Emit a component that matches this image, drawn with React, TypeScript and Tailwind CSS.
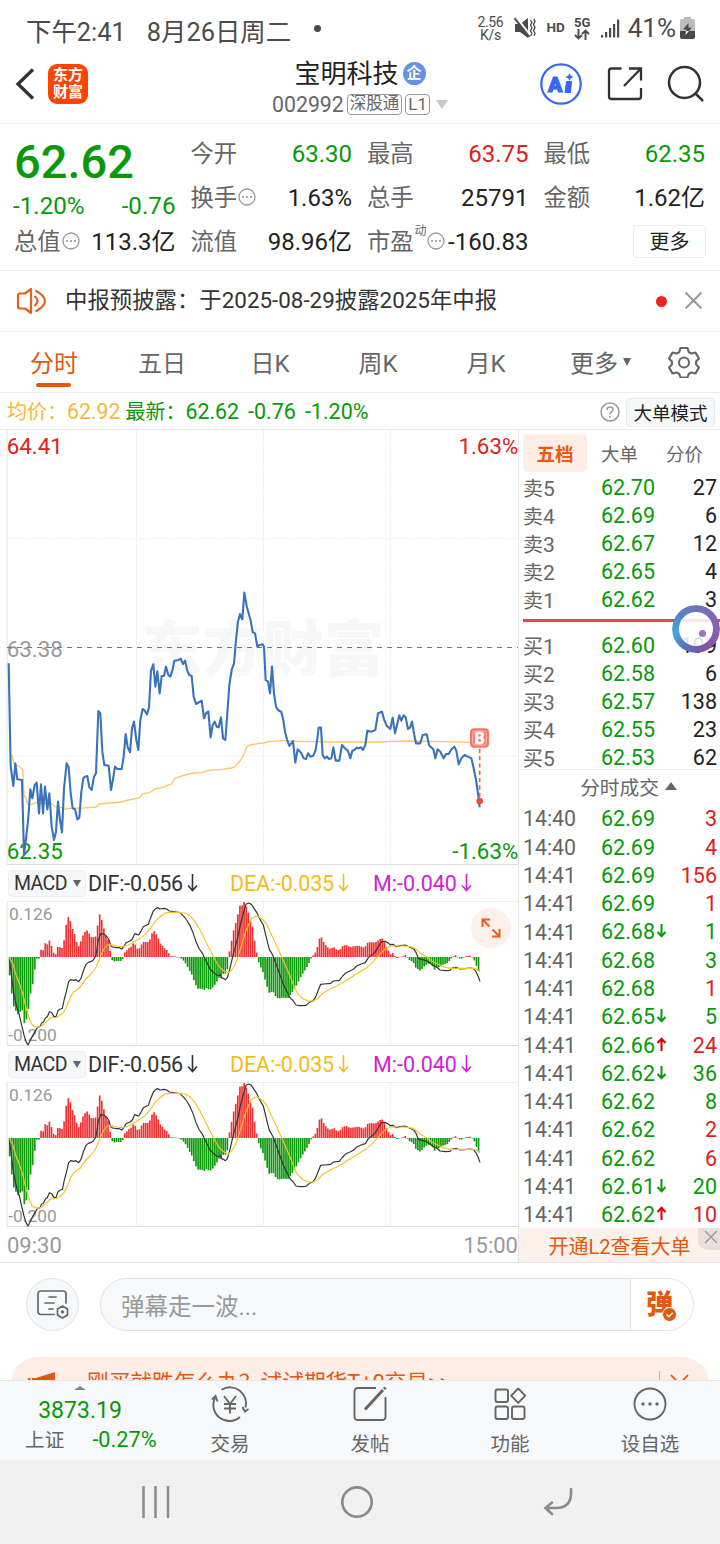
import { ReactNode } from 'react'

const GREEN = '#089908'
const RED = '#e02020'

// Chart coordinates are in 3x units, 1554 units = 518px
const PRICE_LINE =
  '26,700 32,1010 40,1068 46,1000 52,1048 66,1050 72,1275 78,1225 84,1175 91,1078 97,1105 104,1065 110,1058 117,1150 123,1063 129,1150 135,1070 142,1138 148,1090 155,1190 162,1230 168,1205 174,1115 180,1170 186,1207 192,1075 200,1000 206,1012 212,1090 218,1135 225,1138 232,1168 238,1163 244,1085 250,1045 255,1040 262,1038 268,1072 275,1080 282,1040 288,1030 295,843 301,850 307,965 313,1005 326,1007 333,1080 339,1048 345,1010 352,1017 365,1017 371,980 377,912 383,952 390,967 396,895 402,875 409,930 415,960 421,870 428,837 434,842 441,853 447,832 453,722 460,703 466,770 472,724 479,790 485,738 492,738 498,710 505,735 511,740 517,722 523,692 536,690 542,686 549,702 555,692 562,722 568,735 575,738 581,800 588,822 605,812 612,865 618,850 625,844 632,922 638,885 644,875 650,890 656,892 663,862 669,925 676,930 682,850 688,765 695,720 702,700 708,630 714,575 720,552 727,568 733,488 740,528 752,572 758,606 765,610 772,650 779,645 788,643 792,650 797,750 804,755 810,790 816,710 822,790 828,830 834,840 844,846 850,870 855,905 861,928 868,948 879,933 886,998 893,958 903,968 911,985 918,987 924,970 931,980 940,977 947,960 952,925 956,893 963,893 968,975 974,985 981,980 987,987 994,985 1000,952 1007,992 1018,992 1026,945 1033,953 1044,963 1051,985 1057,962 1063,960 1070,953 1076,955 1083,952 1089,960 1096,945 1102,902 1115,905 1126,900 1134,850 1146,845 1152,868 1160,887 1171,897 1178,863 1185,910 1191,885 1198,856 1204,872 1211,856 1217,862 1224,897 1230,893 1236,875 1243,915 1248,940 1261,940 1268,915 1280,913 1288,947 1300,958 1306,985 1313,958 1321,965 1331,985 1338,972 1346,972 1355,957 1363,950 1369,962 1376,1003 1384,985 1394,975 1414,985 1420,1010 1428,1050 1434,1090 1439,1132'

const AVG_LINE =
  '36,975 42,1003 56,1008 68,1018 72,1095 78,1105 84,1123 92,1124 110,1118 130,1122 150,1118 165,1130 185,1133 196,1138 206,1135 250,1134 288,1131 298,1122 330,1119 365,1116 385,1110 418,1104 428,1091 448,1088 468,1076 490,1072 500,1067 515,1062 524,1046 545,1038 560,1034 580,1029 608,1027 625,1021 665,1018 695,1014 705,1010 715,1000 725,985 732,972 740,950 750,945 780,940 792,939 804,935 850,932 900,934 1000,936 1130,936 1180,934 1220,933 1330,935 1410,937'

const DIF_LINE =
  '28,278 34,330 42,390 50,425 58,450 66,485 72,510 78,530 84,540 90,528 100,508 112,488 120,485 125,474 130,472 137,458 142,455 148,440 155,443 162,455 168,455 174,437 180,433 187,430 193,402 199,380 206,350 212,344 222,346 228,344 236,350 243,340 250,318 258,298 265,292 272,290 280,285 288,272 295,225 302,206 312,207 320,214 326,222 332,242 338,246 350,248 358,248 365,252 372,244 378,233 390,228 397,222 404,206 410,208 416,210 422,200 430,185 445,178 452,158 460,138 468,130 474,128 480,132 492,130 500,132 508,138 520,140 540,143 552,155 560,165 570,182 578,200 588,230 598,252 608,266 614,280 622,295 630,312 640,322 650,330 656,332 660,328 664,338 670,340 676,344 682,338 690,310 698,275 706,245 714,215 722,175 730,145 738,118 746,114 754,118 762,130 770,142 776,155 784,170 790,180 796,205 802,230 808,253 818,270 830,302 840,330 850,358 860,378 870,398 880,408 888,420 900,422 918,421 928,412 938,408 946,398 954,378 962,358 972,357 992,355 1000,348 1018,346 1028,333 1038,323 1050,318 1060,313 1070,303 1083,297 1096,293 1105,278 1125,262 1135,245 1145,230 1155,229 1165,234 1170,239 1180,238 1188,245 1200,242 1215,240 1230,247 1242,253 1248,262 1255,280 1265,283 1280,287 1290,294 1302,303 1310,306 1320,315 1336,317 1350,316 1355,310 1368,307 1380,312 1395,311 1410,309 1420,311 1428,320 1434,333 1440,349'

const DEA_LINE =
  '28,278 38,295 48,330 58,355 68,385 76,420 86,455 95,478 104,485 115,487 125,483 135,475 150,460 160,458 170,457 182,450 192,440 202,420 212,395 222,380 240,367 255,345 270,330 285,312 295,290 303,270 312,252 322,240 335,239 350,243 368,245 385,240 400,232 420,220 435,208 450,192 465,170 480,155 495,144 510,142 530,142 555,144 570,152 585,170 600,195 615,225 630,255 645,285 660,308 672,318 685,324 695,315 705,300 715,272 725,240 735,205 745,180 755,160 765,154 772,153 780,158 790,165 800,178 815,210 830,242 845,275 860,310 875,345 885,372 895,388 910,402 925,408 940,408 952,402 965,388 980,378 995,370 1010,363 1030,352 1045,342 1065,330 1080,320 1100,308 1115,295 1130,278 1145,262 1155,252 1170,243 1190,243 1210,243 1230,245 1245,250 1260,264 1280,275 1295,288 1315,298 1335,307 1355,310 1380,310 1410,310 1425,311 1433,314 1439,320'

const HIST_POINTS: [number, number][] = [
  [26, -20], [31, -78], [40, -145], [46, -158], [54, -172], [60, -165], [66, -155], [72, -200], [78, -192], [84, -168], [91, -113], [98, -82], [104, -40], [110, -5], [117, -5], [123, 22], [129, 18], [135, 42], [142, 38], [148, 50], [155, 32], [161, 12], [167, 8], [174, 32], [186, 27], [192, 48], [199, 100], [205, 120], [211, 108], [217, 85], [224, 68], [230, 45], [236, 32], [243, 48], [249, 65], [255, 75], [262, 80], [268, 70], [275, 58], [282, 60], [289, 62], [294, 105], [300, 132], [307, 105], [313, 80], [320, 58], [328, 48], [332, 0], [339, -14], [350, -12], [364, -12], [370, -3], [376, 20], [383, 20], [390, 32], [396, 30], [402, 48], [409, 28], [415, 22], [421, 30], [428, 45], [447, 45], [453, 62], [460, 82], [466, 70], [472, 65], [479, 42], [485, 38], [492, 27], [498, 24], [505, 14], [511, 2], [523, 2], [530, 1], [540, -2], [548, -8], [556, -18], [562, -28], [568, -40], [575, -52], [581, -68], [588, -85], [594, -95], [606, -95], [612, -100], [619, -93], [630, -99], [640, -90], [650, -75], [656, -62], [663, -62], [670, -50], [680, -50], [684, -25], [688, 15], [695, 50], [702, 85], [708, 105], [714, 130], [720, 155], [727, 155], [733, 166], [739, 150], [746, 130], [752, 105], [758, 90], [765, 40], [772, 3], [776, -15], [786, -40], [792, -52], [798, -82], [804, -95], [810, -115], [816, -100], [822, -108], [828, -120], [835, -125], [848, -122], [864, -123], [872, -112], [880, -100], [886, -92], [892, -80], [898, -68], [905, -55], [911, -45], [918, -35], [925, -22], [930, -12], [935, 0], [943, 8], [950, 20], [956, 48], [962, 66], [968, 50], [975, 38], [987, 25], [994, 25], [1000, 32], [1006, 25], [1013, 20], [1020, 22], [1026, 32], [1038, 37], [1050, 30], [1062, 32], [1075, 34], [1088, 30], [1094, 27], [1101, 42], [1112, 45], [1125, 43], [1138, 52], [1145, 58], [1152, 48], [1158, 32], [1164, 22], [1171, 8], [1178, 12], [1185, 2], [1192, -4], [1200, 1], [1208, 1], [1216, 6], [1221, 0], [1226, -8], [1240, -15], [1245, -30], [1252, -36], [1262, -42], [1270, -30], [1278, -24], [1286, -20], [1294, -22], [1304, -38], [1310, -32], [1320, -30], [1330, -22], [1340, -20], [1348, -12], [1356, -2], [1360, 2], [1368, 6], [1376, -3], [1383, -6], [1390, -2], [1398, 2], [1410, 4], [1416, 1], [1420, -5], [1426, -15], [1432, -35], [1440, -52],
]

const BAR_STEP = 6.28

function histAt(x: number) {
  const i = HIST_POINTS.findIndex(([px]) => px >= x)
  if (i <= 0) return HIST_POINTS[0][1]
  const [x0, v0] = HIST_POINTS[i - 1]
  const [x1, v1] = HIST_POINTS[i]
  return v0 + ((v1 - v0) * (x - x0)) / (x1 - x0)
}

const HIST_BARS = Array.from({ length: 225 }, (_, i) => {
  const x = 29 + i * BAR_STEP
  return { x, v: histAt(x) }
})

const sells = [
  ['卖5', '62.70', '27'],
  ['卖4', '62.69', '6'],
  ['卖3', '62.67', '12'],
  ['卖2', '62.65', '4'],
  ['卖1', '62.62', '3'],
]

const buys = [
  ['买1', '62.60', '199'],
  ['买2', '62.58', '6'],
  ['买3', '62.57', '138'],
  ['买4', '62.55', '23'],
  ['买5', '62.53', '62'],
]

type Trade = { time: string; price: string; dir?: 'up' | 'down'; vol: string; buy: boolean }

const trades: Trade[] = [
  { time: '14:40', price: '62.69', vol: '3', buy: true },
  { time: '14:40', price: '62.69', vol: '4', buy: true },
  { time: '14:41', price: '62.69', vol: '156', buy: true },
  { time: '14:41', price: '62.69', vol: '1', buy: true },
  { time: '14:41', price: '62.68', dir: 'down', vol: '1', buy: false },
  { time: '14:41', price: '62.68', vol: '3', buy: false },
  { time: '14:41', price: '62.68', vol: '1', buy: true },
  { time: '14:41', price: '62.65', dir: 'down', vol: '5', buy: false },
  { time: '14:41', price: '62.66', dir: 'up', vol: '24', buy: true },
  { time: '14:41', price: '62.62', dir: 'down', vol: '36', buy: false },
  { time: '14:41', price: '62.62', vol: '8', buy: false },
  { time: '14:41', price: '62.62', vol: '2', buy: true },
  { time: '14:41', price: '62.62', vol: '6', buy: true },
  { time: '14:41', price: '62.61', dir: 'down', vol: '20', buy: false },
  { time: '14:41', price: '62.62', dir: 'up', vol: '10', buy: true },
]

function StatusBar() {
  return (
    <div className="flex h-14 items-center pl-[26px] pr-[25px] text-[25.4px] text-[#4b4b4b]">
      <span className="mt-[8px]">下午2:41</span>
      <span className="ml-[21px] mt-[8px]">8月26日周二</span>
      <span className="ml-[23px] size-[7px] rounded-full bg-[#4b4b4b]" />
      <div className="ml-auto flex items-center">
        <div className="w-[28px] text-center text-[14px] leading-[14px] tracking-tight">
          <div>2.56</div>
          <div className="-mt-px">K/s</div>
        </div>
        <svg className="ml-[10px]" width="22" height="22" viewBox="0 0 22 22" fill="none" stroke="#4b4b4b">
          <path d="M1 7h5l8-6v20l-8-6H1z" fill="#4b4b4b" stroke="none" />
          <path d="M2 0l13 17" stroke="#fff" strokeWidth="2.400" />
          <path d="M0.500 1l15 19" strokeWidth="2" />
          <path d="M16.500 3l1.500 2.500-1.500 2.500 1.500 3-1.500 3 1.500 2.500-1.500 2.500M20 2l1 2.700-1.500 2.700 1.500 3.200-1.500 3 1.500 2.700-1 2.700" strokeWidth="1.300" />
        </svg>
        <span className="ml-[10px] text-[13.500px] font-bold leading-none">HD</span>
        <div className="ml-[9px] flex w-[17px] flex-col items-center">
          <span className="text-[13px] font-bold leading-[13px]">5G</span>
          <svg width="16" height="11" viewBox="0 0 16 11" fill="none" stroke="#4b4b4b" strokeWidth="1.900">
            <path d="M4.500 0v9M1 6l3.500 3.500 3.500-3.500M11.500 11V2M8 5l3.500-3.500 3.500 3.500" />
          </svg>
        </div>
        <svg className="ml-[10px]" width="19" height="19" viewBox="0 0 19 19" fill="#4b4b4b">
          <rect x="0" y="16" width="2.200" height="2.500" />
          <rect x="4" y="13" width="2.200" height="5.500" />
          <rect x="8" y="9" width="2.200" height="9.500" />
          <rect x="12" y="5" width="2.200" height="13.500" />
          <rect x="16" y="0.500" width="2.200" height="18" />
        </svg>
        <span className="ml-[8px] text-[26px] leading-none">41%</span>
        <svg className="ml-[4px]" width="15" height="22" viewBox="0 0 15 22">
          <path d="M4 0h7v2h2q2 0 2 2v16q0 2-2 2H2q-2 0-2-2V4q0-2 2-2h2z" fill="#bdbdbd" />
          <path d="M0 14h15v6q0 2-2 2H2q-2 0-2-2z" fill="#4b4b4b" />
          <path d="M8.500 6l-5.500 6.500h3.500L5.500 18l6.500-7.500H8.500z" fill="#4b4b4b" />
          <path d="M6 14h3l-3.500 4z" fill="#fff" />
        </svg>
      </div>
    </div>
  )
}

function Header() {
  return (
    <div className="grid h-[68px] grid-cols-[180px_1fr_180px] border-b border-[#ececec]">
      <div className="flex items-center pl-[15px] pb-[12px]">
        <svg width="21" height="32" viewBox="0 0 21 32" fill="none" stroke="#333" strokeWidth="3.300">
          <path d="M18 1.500L3 16l15 14.500" />
        </svg>
        <div className="ml-[12px] mt-px flex size-10 flex-col items-center justify-center rounded-[9px] bg-[#ff4400] text-[15px] font-bold leading-[17px] text-white">
          <span>东方</span>
          <span>财富</span>
        </div>
      </div>
      <div className="flex flex-col items-center">
        <div className="flex h-[34px] items-center pt-[1px] text-[26px] leading-none text-[#222]">
          宝明科技
          <span className="ml-[4px] flex size-[23px] items-center justify-center rounded-full bg-[#6590e4] text-[15px] font-bold leading-none text-white">
            企
          </span>
        </div>
        <div className="flex h-[28px] items-center text-[21.300px] leading-none text-[#666]">
          <span className="pt-px">002992</span>
          <span className="ml-[3px] flex h-[21px] items-center rounded-[4px] border border-[#999] px-[2px] text-[16.500px] leading-none">深股通</span>
          <span className="ml-[3px] flex h-[21px] items-center rounded-[4px] border border-[#999] px-[2px] text-[17px] leading-none">L1</span>
          <span className="ml-[6px] border-x-[6.500px] border-t-[9px] border-x-transparent border-t-[#c9c9c9]" />
        </div>
      </div>
      <div className="flex items-center pb-[11px]">
        <svg className="ml-[-1px]" width="44" height="44" viewBox="0 0 44 44">
          <circle cx="22" cy="22" r="19.700" fill="none" stroke="#3765f5" strokeWidth="2.200" />
          <text x="9" y="30" fontSize="21" fontWeight="900" fill="#3765f5" stroke="#3765f5" strokeWidth="1.200">A</text>
          <path d="M27.500 19.500h5l-1 11H26z" fill="#3765f5" stroke="#3765f5" />
          <path d="M30.500 11l1.300 2.700 2.700 1.300-2.700 1.300-1.300 2.700-1.300-2.700-2.700-1.300 2.700-1.300z" fill="#3765f5" />
        </svg>
        <svg className="ml-[24px]" width="36" height="36" viewBox="0 0 36 36" fill="none" stroke="#333" strokeWidth="2.300">
          <path d="M14.500 2.500H4.500Q2 2.500 2 5v25.500Q2 33 4.500 33h27q2.500 0 2.500-2.500V22" />
          <path d="M22 2.500h12v12M33 3.500L17 20" />
        </svg>
        <svg className="ml-[24px]" width="38" height="38" viewBox="0 0 38 38" fill="none" stroke="#333" strokeWidth="2.500">
          <circle cx="17.500" cy="17.500" r="15.500" />
          <path d="M28.500 28.500l7.500 7.500" />
        </svg>
      </div>
    </div>
  )
}

function Dots({ className = '' }: { className?: string }) {
  return (
    <svg className={className} width="18" height="18" viewBox="0 0 18 18" fill="none">
      <circle cx="9" cy="9" r="8" stroke="#999" strokeWidth="1.300" />
      <g fill="#999">
        <circle cx="5" cy="9" r="1.100" />
        <circle cx="9" cy="9" r="1.100" />
        <circle cx="13" cy="9" r="1.100" />
      </g>
    </svg>
  )
}

function Stat({ label, value, color = 'text-[#222]', extra }: { label: string; value: string; color?: string; extra?: ReactNode }) {
  return (
    <div className="flex h-[44px] items-center whitespace-nowrap leading-none">
      <span className="-ml-px pt-px text-[23.300px] text-[#666]">{label}</span>
      {extra}
      <span className={`ml-auto text-[24px] ${color}`}>{value}</span>
    </div>
  )
}

function Quote() {
  return (
    <div className="grid h-[147px] grid-cols-4 grid-rows-[44px_44px_44px] gap-x-4 border-b border-[#f0f0f0] px-[15px] pt-[8px]">
      <div className="row-span-2 flex flex-col text-[#089908]">
        <div className="-ml-px mt-[5px] text-[47px] font-medium leading-[50px]">62.62</div>
        <div className="mt-[5px] flex justify-between text-[24.200px] leading-[28px]">
          <span className="-ml-[2px]">-1.20%</span>
          <span>-0.76</span>
        </div>
      </div>
      <Stat label="今开" value="63.30" color="text-[#089908]" />
      <Stat label="最高" value="63.75" color="text-[#e02020]" />
      <Stat label="最低" value="62.35" color="text-[#089908]" />
      <Stat label="换手" value="1.63%" extra={<Dots className="mb-[3px] ml-px" />} />
      <Stat label="总手" value="25791" />
      <Stat label="金额" value="1.62亿" />
      <Stat label="总值" value="113.3亿" extra={<Dots className="mb-[3px] ml-px" />} />
      <Stat label="流值" value="98.96亿" />
      <Stat
        label="市盈"
        value="-160.83"
        extra={
          <>
            <span className="mb-[22px] ml-px text-[12px] text-[#666]">动</span>
            <Dots className="mb-[3px]" />
          </>
        }
      />
      <div className="flex h-[44px] items-center justify-end">
        <span className="-mr-[1px] mb-px flex h-[33px] w-[73px] items-center justify-center rounded-[4px] border border-[#ececec] text-[20px] leading-none text-[#222]">
          更多
        </span>
      </div>
    </div>
  )
}

function Notice() {
  return (
    <div className="flex h-[61px] items-center border-b border-[#ececec] pl-[16px] pr-[17px] text-[22.400px] text-[#333]">
      <svg width="32" height="28" viewBox="0 0 32 28" fill="none" stroke="#e3611c" strokeWidth="2.200">
        <path d="M15 2v24l-6-4.500H4Q2 21.500 2 19.500v-11Q2 6.500 4 6.500h5z" strokeLinejoin="round" />
        <path d="M18.500 9q6 5 0 10M19.500 3.500q19 10.500 0 21" />
      </svg>
      <span className="ml-[17px]">中报预披露：于2025-08-29披露2025年中报</span>
      <span className="ml-auto size-[11px] rounded-full bg-[#ee2222]" />
      <svg className="mb-px ml-[17px]" width="19" height="19" viewBox="0 0 19 19" stroke="#999" strokeWidth="2">
        <path d="M1.500 1.500l16 16M17.500 1.500l-16 16" />
      </svg>
    </div>
  )
}

function PeriodTabs() {
  return (
    <div className="flex h-[61px] items-center border-b border-[#ececec] text-[24px] text-[#666]">
      <div className="relative w-[108px] pt-[4px] text-center text-[#e3580f]">
        分时
        <span className="absolute -bottom-[5px] left-[36px] h-[4px] w-[35px] rounded-full bg-[#e3580f]" />
      </div>
      <div className="w-[108px] pt-[4px] text-center">五日</div>
      <div className="w-[108px] pt-[4px] text-center">日K</div>
      <div className="w-[108px] pt-[4px] text-center">周K</div>
      <div className="w-[108px] pt-[4px] text-center">月K</div>
      <div className="flex items-center pl-[30px]">
        <span className="pt-[4px]">更多</span>
        <span className="ml-[5px] border-x-[4.500px] border-t-[8px] border-x-transparent border-t-[#666]" />
      </div>
      <svg className="ml-auto mr-[20px]" width="32" height="32" viewBox="0 0 32 32" fill="none" stroke="#666" strokeWidth="2.100" strokeLinejoin="round">
        <path d="M12.500 2h7l1.200 4 2.800 1.600 4-1 3.500 6-2.900 3v2.800l2.900 3-3.500 6-4-1-2.800 1.600-1.200 3.500h-7l-1.200-3.500-2.800-1.600-4 1-3.500-6 2.900-3v-2.800l-2.900-3 3.500-6 4 1L11.300 6z" />
        <circle cx="16" cy="16.500" r="5" />
      </svg>
    </div>
  )
}

function LatestBar() {
  return (
    <div className="flex h-[37px] items-center whitespace-nowrap border-b border-[#e8e8e8] pl-[7px] pr-[5px] pt-px text-[20px] leading-none">
      <span className="text-[#f5b83d]">
        均价：<span className="text-[21.300px]">62.92</span>
      </span>
      <span className="ml-[5px] text-[#089908]">
        最新：<span className="text-[21.300px]">62.62</span>
      </span>
      <span className="ml-[9px] text-[21.500px] text-[#089908]">-0.76</span>
      <span className="ml-[9px] text-[21.500px] text-[#089908]">-1.20%</span>
      <svg className="ml-auto" width="20" height="20" viewBox="0 0 20 20" fill="none" stroke="#999" strokeWidth="1.500">
        <circle cx="10" cy="10" r="9" />
        <path d="M7 8q0-3 3-3t3 2.700q0 1.500-1.700 2.500T10 12.500" />
        <path d="M10 14v1.800" />
      </svg>
      <span className="ml-[6px] mt-[2px] flex h-[29px] w-[89px] items-center justify-center rounded-[4px] border border-[#e8eaee] bg-[#f6f7f9] pt-[3px] text-[18.500px] text-[#222]">
        大单模式
      </span>
    </div>
  )
}

function GridLines({ height }: { height: number }) {
  return (
    <g stroke="#f0f0f0" strokeWidth="3" fill="none">
      <path d={`M409 0V${height}M790 0V${height}M1171 0V${height}`} strokeDasharray="15 3" />
      <path d={`M21.500 0V${height}`} stroke="#e6e6e6" />
    </g>
  )
}

function PriceChart() {
  return (
    <svg className="block" width="518" height="435" viewBox="0 0 1554 1305">
      <text x="425" y="724" fontSize="182" fontWeight="900" fill="#f7f7f7">东方财富</text>
      <GridLines height={1303} />
      <path d="M21 326H1554M21 978H1554" stroke="#f3f3f3" strokeWidth="3" strokeDasharray="15 3" />
      <text x="20" y="680" fontSize="67" fill="#999">63.38</text>
      <path d="M21 652.500H1554" stroke="#777" strokeWidth="3" strokeDasharray="15 15" />
      <path d="M21 1303.500H1554" stroke="#ddd" strokeWidth="3" />
      <polyline points={AVG_LINE} fill="none" stroke="#f7c768" strokeWidth="4" />
      <text x="20" y="73" fontSize="67" fill={RED}>64.41</text>
      <text x="1555" y="73" fontSize="67" fill={RED} textAnchor="end">1.63%</text>
      <text x="20" y="1286" fontSize="67" fill={GREEN}>62.35</text>
      <text x="1555" y="1286" fontSize="67" fill={GREEN} textAnchor="end">-1.63%</text>
      <polyline points={PRICE_LINE} fill="none" stroke="#3973b9" strokeWidth="6.300" strokeLinejoin="round" />
      <rect x="1410" y="895" width="57" height="58" rx="12" fill="#f5776a" />
      <rect x="1418" y="903" width="41" height="42" rx="8" fill="none" stroke="#fff" strokeOpacity="0.500" strokeWidth="3" />
      <text x="1438.500" y="941" fontSize="48" fontWeight="700" fill="#fff" stroke="#fff" strokeWidth="2" textAnchor="middle">B</text>
      <path d="M1439 956V1105" stroke="#e8665c" strokeWidth="5" strokeDasharray="13 9" />
      <circle cx="1439" cy="1113" r="10" fill="#f0483e" />
    </svg>
  )
}

function ArrowDown({ color }: { color: string }) {
  return (
    <svg className="mb-[3px] ml-[4px]" width="11" height="19" viewBox="0 0 11 19" fill="none" stroke={color} strokeWidth="1.600">
      <path d="M5.500 1v16.500M1 12.500l4.500 5 4.500-5" />
    </svg>
  )
}

function MacdPanel({ expandable = false }: { expandable?: boolean }) {
  return (
    <div className="relative">
      <div className="flex h-[36px] items-center whitespace-nowrap text-[21.500px] leading-none text-[#333]">
        <span className="ml-[8px] flex h-[27px] w-[78px] items-center rounded-[4px] border border-[#eceef1] bg-[#f6f7f9] pl-[5px] pt-px text-[19.500px] tracking-[-0.6px]">
          MACD
          <span className="ml-[6px] border-x-[4.500px] border-t-[7.500px] border-x-transparent border-t-[#666]" />
        </span>
        <span className="ml-[2px] flex w-[142px] items-center pt-px tracking-[-0.2px]">
          DIF:-0.056
          <ArrowDown color="#333" />
        </span>
        <span className="flex w-[143px] items-center pt-px tracking-[-0.15px] text-[#f2bd18]">
          DEA:-0.035
          <ArrowDown color="#f2bd18" />
        </span>
        <span className="flex items-center pt-px text-[#cf22d6]">
          M:-0.040
          <ArrowDown color="#cf22d6" />
        </span>
      </div>
      <svg className="block" width="518" height="145" viewBox="0 108 1554 435">
        <g transform="translate(0 108)">
          <GridLines height={433} />
        </g>
        <path d="M21 109.500H1554" stroke="#ececec" strokeWidth="3" />
        <path d="M21 541.500H1554" stroke="#ddd" strokeWidth="3" />
        {HIST_BARS.map(({ x, v }) => (
          <rect
            key={x}
            x={x - 2.5}
            y={v > 0 ? 276 - v : 276}
            width="5"
            height={Math.max(Math.abs(v), 1.5)}
            fill={v > 0 ? '#f03030' : '#0a9a0a'}
          />
        ))}
        <text x="27" y="165" fontSize="52" fill="#999">0.126</text>
        <text x="25" y="528" fontSize="52" fill="#999">-0.200</text>
        <polyline points={DIF_LINE} fill="none" stroke="#333" strokeWidth="3.500" strokeLinejoin="round" />
        <polyline points={DEA_LINE} fill="none" stroke="#f2c522" strokeWidth="3.500" strokeLinejoin="round" />
      </svg>
      {expandable && (
        <div className="absolute right-[7px] top-[43px] flex size-10 items-center justify-center rounded-full bg-[#fdf0e9]">
          <svg width="20" height="20" viewBox="0 0 20 20" fill="none" stroke="#e3611c" strokeWidth="2">
            <path d="M1.500 9V1.500H9M1.500 1.500l7 7M18.500 11v7.500H11M18.500 18.500l-7-7" />
          </svg>
        </div>
      )}
    </div>
  )
}

function BookRow({ row }: { row: string[] }) {
  const [label, price, vol] = row
  return (
    <div className="flex h-[28px] items-center pl-[4px] pr-[3px] text-[21.500px] leading-none">
      <span className="mt-[3px] w-[78px] text-[20px] text-[#666]">
        {label[0]}
        <span className="text-[21px]">{label[1]}</span>
      </span>
      <span className="text-[#089908]">{price}</span>
      <span className="ml-auto text-[#222]">{vol}</span>
    </div>
  )
}

function TradeRow({ trade }: { trade: Trade }) {
  return (
    <div className="flex h-[28.270px] items-center pl-[4px] pr-[3px] text-[21.500px] leading-none">
      <span className="w-[78px] text-[21.300px] text-[#666]">{trade.time}</span>
      <span className="text-[#089908]">{trade.price}</span>
      {trade.dir && (
        <svg
          className={trade.dir === 'up' ? 'mb-[3px] ml-px rotate-180' : 'mb-[2px] ml-px'}
          width="11"
          height="14"
          viewBox="0 0 11 14"
          fill="none"
          stroke={trade.dir === 'up' ? '#e00000' : GREEN}
          strokeWidth="2"
        >
          <path d="M5.500 0v12M1.500 8l4 4.200L9.500 8" />
        </svg>
      )}
      <span className={trade.buy ? 'ml-auto text-[#e02020]' : 'ml-auto text-[#089908]'}>{trade.vol}</span>
    </div>
  )
}

function OrderBook() {
  return (
    <div className="relative flex w-[202px] flex-col border-l border-[#e6e6e6]">
      <div className="flex h-[44px] items-center pl-[4px] pt-[2px] text-[18.500px] leading-none text-[#666]">
        <span className="flex h-[38px] w-[64px] items-center justify-center rounded-[5px] bg-[#feede4] pt-[4px] font-bold text-[#f2570c]">五档</span>
        <span className="ml-[14px] pt-[4px]">大单</span>
        <span className="ml-[28px] pt-[4px]">分价</span>
      </div>
      {sells.map((r) => (
        <BookRow key={r[0]} row={r} />
      ))}
      <div className="flex h-[18px] items-center pb-[5px] pl-[4px]">
        <div className="h-[3px] w-full bg-[#dd4b4b]" />
      </div>
      {buys.map((r) => (
        <BookRow key={r[0]} row={r} />
      ))}
      <div className="mt-[-3px] flex h-[36px] items-center justify-center border-t border-[#ececec] pl-[18px] text-[19.700px] leading-none text-[#666]">
        <span className="pt-[2px]">分时成交</span>
        <span className="mb-[3px] ml-[6px] border-x-[6.500px] border-b-[8px] border-x-transparent border-b-[#666]" />
      </div>
      {trades.map((t, i) => (
        <TradeRow key={i} trade={t} />
      ))}
      <div className="relative -mt-px flex flex-1 items-center justify-center bg-[#fdf1eb] pt-[5px] text-[20px] leading-none text-[#e3580f]">
        开通L2查看大单
        <span className="absolute right-0 top-0 flex h-[22px] w-[22px] items-center justify-center rounded-bl-[10px] bg-[#e8dedb]">
          <svg className="mb-[3px] ml-[3px]" width="14" height="14" viewBox="0 0 14 14" stroke="#999" strokeWidth="1.400">
            <path d="M1 1l12 12M13 1L1 13" />
          </svg>
        </span>
      </div>
      <FloatingBall />
    </div>
  )
}

function FloatingBall() {
  return (
    <div className="absolute right-0 top-[175px] size-[48px] rounded-full bg-[conic-gradient(from_0deg,#6f74bd,#8a5fae_25%,#7f55a8_45%,#5a6fb5_58%,#45a9dc_72%,#5586c4_85%,#6f74bd)] shadow-[0_0_4px_rgba(0,0,0,0.35)] [mask:radial-gradient(circle,#000d_16px,#000_16.5px)]">
      <div className="absolute inset-[7px] rounded-full bg-white">
        <div className="absolute left-[20px] top-[18px] size-[7px] rounded-full bg-[#8a5fae]" />
      </div>
    </div>
  )
}

function DanmuBar() {
  return (
    <div className="flex h-[94px] items-start pl-[26px] pr-[26px] pt-[15px]">
      <div className="flex size-[53px] items-center justify-center rounded-full border border-[#dfe2e7] bg-[#f7f8fa]">
        <svg className="ml-px mt-px" width="34" height="32" viewBox="0 0 34 32" fill="none" stroke="#666" strokeWidth="1.700" strokeLinecap="round">
          <path d="M18 25.500H5q-3 0-3-3V5q0-3 3-3h22q3 0 3 3v9" />
          <path d="M13 8h7M9 14h9M13 20h4" />
          <path d="M26.500 17l5 3v6l-5 3-5-3v-6z" strokeLinejoin="round" />
          <circle cx="26.500" cy="23" r="1.200" fill="#666" strokeWidth="1" />
        </svg>
      </div>
      <div className="ml-[21px] flex h-[53px] flex-1 overflow-hidden rounded-full border border-[#dfe2e7] bg-[#f7f8fa]">
        <div className="flex flex-1 items-center pl-[20px] pt-[6px] text-[23.500px] leading-none text-[#999]">弹幕走一波...</div>
        <div className="flex w-[63px] items-center border-l border-[#dfe2e7] bg-white pl-[15px]">
          <div className="relative pt-[2px] text-[27px] font-black leading-none text-[#e3580f]">
            弹
            <svg className="absolute -bottom-[3px] -right-[4px]" width="15" height="15" viewBox="0 0 15 15">
              <circle cx="7.500" cy="7.500" r="7" fill="#e3580f" stroke="#fff" />
              <path d="M4.500 7.500l2.300 2.300 4-4" fill="none" stroke="#fff" strokeWidth="1.500" />
            </svg>
          </div>
        </div>
      </div>
    </div>
  )
}

function Promo() {
  return (
    <div className="h-[23px] overflow-hidden px-[11px]">
      <div className="flex h-[52px] items-center rounded-[26px] bg-[#fdeee5] pl-[16px] pr-[20px] text-[21.700px] text-[#e3580f]">
        <svg className="mt-[2px]" width="30" height="26" viewBox="0 0 30 26" fill="#e3580f">
          <path d="M28 1v24L9 17V7zM1 7h2.500v10H1zM5 7h5v10H5z" />
        </svg>
        <span className="ml-[30px] pt-[1px]">刚买就跌怎么办？试试期货T+0交易&gt;&gt;</span>
        <span className="ml-auto h-[24px] w-px bg-[#f0a37c]" />
        <svg className="ml-[10px] mt-[2px]" width="19" height="22" viewBox="0 0 19 22" stroke="#e3580f" strokeWidth="1.800">
          <path d="M1 2l17 18M18 2L1 20" />
        </svg>
      </div>
    </div>
  )
}

function NavItem({ label, children }: { label: string; children: ReactNode }) {
  return (
    <div className="flex w-[140px] flex-col items-center pt-[4px]">
      <svg width="38" height="38" viewBox="0 0 38 38" fill="none" stroke="#666" strokeWidth="1.900">
        {children}
      </svg>
      <span className="mt-[12px] text-[19.500px] leading-none text-[#666]">{label}</span>
    </div>
  )
}

function BottomBar() {
  return (
    <div className="flex h-[80px] border-t border-[#e6e6e6] bg-[#f6f8fa]">
      <div className="flex w-[160px] flex-col items-center text-[#089908]">
        <span className="mt-[5px] border-x-[6px] border-b-[4px] border-x-transparent border-b-[#888]" />
        <span className="mt-[9px] text-[23px] leading-none">3873.19</span>
        <div className="mt-[7px] flex w-full items-center pl-[25px] text-[19.700px] leading-none">
          <span className="pt-px text-[#666]">上证</span>
          <span className="ml-[28px] text-[21.700px]">-0.27%</span>
        </div>
      </div>
      <div className="flex">
        <NavItem label="交易">
          <path d="M10.500 4.800A16 16 0 0 1 34.500 22.500M29 32A16 16 0 0 1 4 13" />
          <path d="M1 14.500l3.500-3.500 2 5.500M37.500 24l-3.500 2.500-2.500-4.500" />
          <path d="M13 11l6 8 6-8M19 19v9.500M13 19h12M13 23.500h12" />
        </NavItem>
        <NavItem label="发帖">
          <path d="M25 3H7Q3.500 3 3.500 6.500v25Q3.500 35 7 35h24q3.500 0 3.500-3.500V12" />
          <path d="M14 24.500L32 5" strokeWidth="3" />
          <path d="M33 4l1.500-1.500" strokeWidth="3" />
        </NavItem>
        <NavItem label="功能">
          <rect x="4.500" y="4.500" width="12.500" height="12.500" rx="2" />
          <rect x="4.500" y="21.500" width="12.500" height="12.500" rx="2" />
          <rect x="21" y="21.500" width="12.500" height="12.500" rx="2" />
          <path d="M27.200 3.500l7 7.200-7 7.200-7-7.200z" strokeLinejoin="round" />
        </NavItem>
        <NavItem label="设自选">
          <circle cx="19" cy="19" r="15.500" />
          <g fill="#666" stroke="none">
            <circle cx="12" cy="19" r="1.700" />
            <circle cx="19" cy="19" r="1.700" />
            <circle cx="26" cy="19" r="1.700" />
          </g>
        </NavItem>
      </div>
    </div>
  )
}

function SystemNav() {
  return (
    <div className="flex h-[84px] items-center bg-[#f1f1f1] pl-[141px]">
      <svg width="30" height="34" viewBox="0 0 30 34" stroke="#8a8a8a" strokeWidth="2.500">
        <path d="M2.500 1v32M14.500 1v32M27 1v32" />
      </svg>
      <svg className="ml-[169px]" width="34" height="34" viewBox="0 0 34 34" fill="none" stroke="#8a8a8a" strokeWidth="2.700">
        <circle cx="17" cy="17" r="14.700" />
      </svg>
      <svg className="ml-[169px]" width="32" height="32" viewBox="0 0 32 32" fill="none" stroke="#8a8a8a" strokeWidth="2.600" strokeLinecap="round">
        <path d="M28 3v4q0 15-15 15H3M9 16.500L2.500 22l6.500 6" />
      </svg>
    </div>
  )
}

export default function App() {
  return (
    <div className="w-[720px] overflow-hidden bg-white font-[Roboto,'Noto_Sans_CJK_SC',sans-serif]">
      <StatusBar />
      <Header />
      <Quote />
      <Notice />
      <PeriodTabs />
      <LatestBar />
      <div className="flex h-[833px] border-b border-[#e6e6e6]">
        <div className="w-[518px]">
          <PriceChart />
          <MacdPanel expandable />
          <MacdPanel />
          <div className="flex h-[35px] items-center justify-between pl-[7px] pt-[2px] text-[22px] leading-none text-[#999]">
            <span>09:30</span>
            <span>15:00</span>
          </div>
        </div>
        <OrderBook />
      </div>
      <DanmuBar />
      <Promo />
      <BottomBar />
      <SystemNav />
    </div>
  )
}
